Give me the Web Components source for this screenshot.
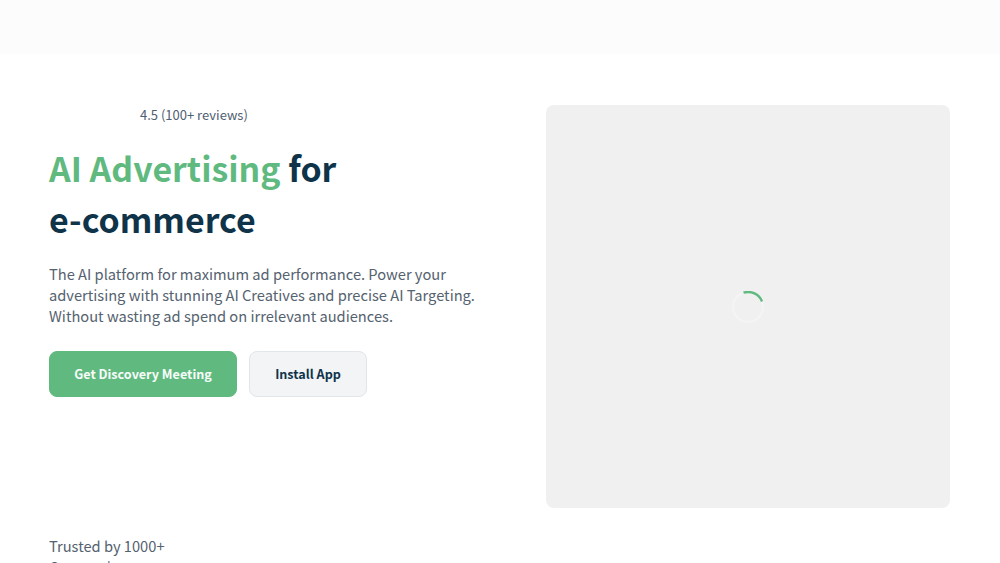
<!DOCTYPE html>
<html lang="en">
<head>
<meta charset="utf-8">
<title>AI Advertising for e-commerce</title>
<style>
html, body { margin: 0; height: 563px; overflow: hidden; background: #fff; }
body { font-family: "Noto Sans CJK SC", "Noto Sans", sans-serif; color: #0f3349; }
</style>
</head>
<body>
<top-bar></top-bar>
<hero-section>
  <span slot="rating">4.5 (100+ reviews)</span>
  <span slot="accent">AI Advertising</span>
  <span slot="title">for e&#8209;commerce</span>
  <span slot="lead">The AI platform for maximum ad performance. Power your advertising with stunning AI Creatives and precise AI Targeting. Without wasting ad spend on irrelevant audiences.</span>
  <cta-button slot="actions" kind="primary">Get Discovery Meeting</cta-button>
  <cta-button slot="actions">Install App</cta-button>
  <span slot="trust">Trusted by 1000+ Companies</span>
  <media-loader slot="media"></media-loader>
</hero-section>
<script>
class TopBar extends HTMLElement {
    connectedCallback() {
        this.attachShadow({ mode: 'open' });
        this.shadowRoot.innerHTML = `
            <style>
                :host { display: block; height: 54px; background: #fcfcfc; }
            </style>
        `;
    }
}
customElements.define('top-bar', TopBar);

class HeroSection extends HTMLElement {
    connectedCallback() {
        this.attachShadow({ mode: 'open' });
        this.shadowRoot.innerHTML = `
            <style>
                :host { display: grid; grid-template-columns: 437px 404px; column-gap: 60px; padding: 51px 50px 0 49px; }
                .copy { display: flex; flex-direction: column; align-items: flex-start; }
                .rating { padding-left: 91px; font-size: 13px; line-height: 20px; color: #4f6072; }
                h1 { margin: 18px 0 0; font-size: 33.9px; line-height: 50.5px; font-weight: 600; color: #0f3349; max-width: 400px; }
                .accent { color: #60ba80; }
                .lead { margin: 19px 0 0; font-size: 14.67px; line-height: 21px; font-weight: 400; color: #55626f; width: 430px; }
                .actions { display: flex; align-items: center; gap: 12px; margin-top: 25px; }
                .trust { margin-top: 138px; width: 150px; font-size: 14.67px; line-height: 21px; font-weight: 400; color: #55626f; }
                .media { height: 403px; }
            </style>
            <div class="copy">
                <div class="rating"><slot name="rating"></slot></div>
                <h1><span class="accent"><slot name="accent"></slot></span> <slot name="title"></slot></h1>
                <p class="lead"><slot name="lead"></slot></p>
                <div class="actions"><slot name="actions"></slot></div>
                <div class="trust"><slot name="trust"></slot></div>
            </div>
            <div class="media"><slot name="media"></slot></div>
        `;
    }
}
customElements.define('hero-section', HeroSection);

class CtaButton extends HTMLElement {
    connectedCallback() {
        this.attachShadow({ mode: 'open' });
        const primary = this.getAttribute('kind') === 'primary';
        this.shadowRoot.innerHTML = `
            <style>
                :host { display: block; }
                button {
                    display: block; box-sizing: border-box; height: 46px; border-radius: 8px;
                    width: ${primary ? 188 : 118}px;
                    font: 600 12.6px/20px "Noto Sans CJK SC", "Noto Sans", sans-serif;
                    padding: 0;
                    background: ${primary ? '#60ba80' : '#f3f4f6'};
                    color: ${primary ? '#f7fcf9' : '#0f3349'};
                    border: 1px solid ${primary ? '#60ba80' : '#e2e5ea'};
                }
            </style>
            <button><slot></slot></button>
        `;
    }
}
customElements.define('cta-button', CtaButton);

class MediaLoader extends HTMLElement {
    connectedCallback() {
        this.attachShadow({ mode: 'open' });
        this.shadowRoot.innerHTML = `
            <style>
                :host { display: flex; align-items: center; justify-content: center; height: 403px; background: #f0f0f0; border-radius: 8px; }
                svg { display: block; width: 32px; height: 32px; fill: none; stroke-width: 2.4; }
            </style>
            <svg viewBox="0 0 32 32">
                <circle cx="16" cy="16" r="15" stroke="#f4f4f4"></circle>
                <path d="M11.5 1.7A15 15 0 0 1 30 10.5" stroke="#60ba80"></path>
            </svg>
        `;
    }
}
customElements.define('media-loader', MediaLoader);
</script>
</body>
</html>
